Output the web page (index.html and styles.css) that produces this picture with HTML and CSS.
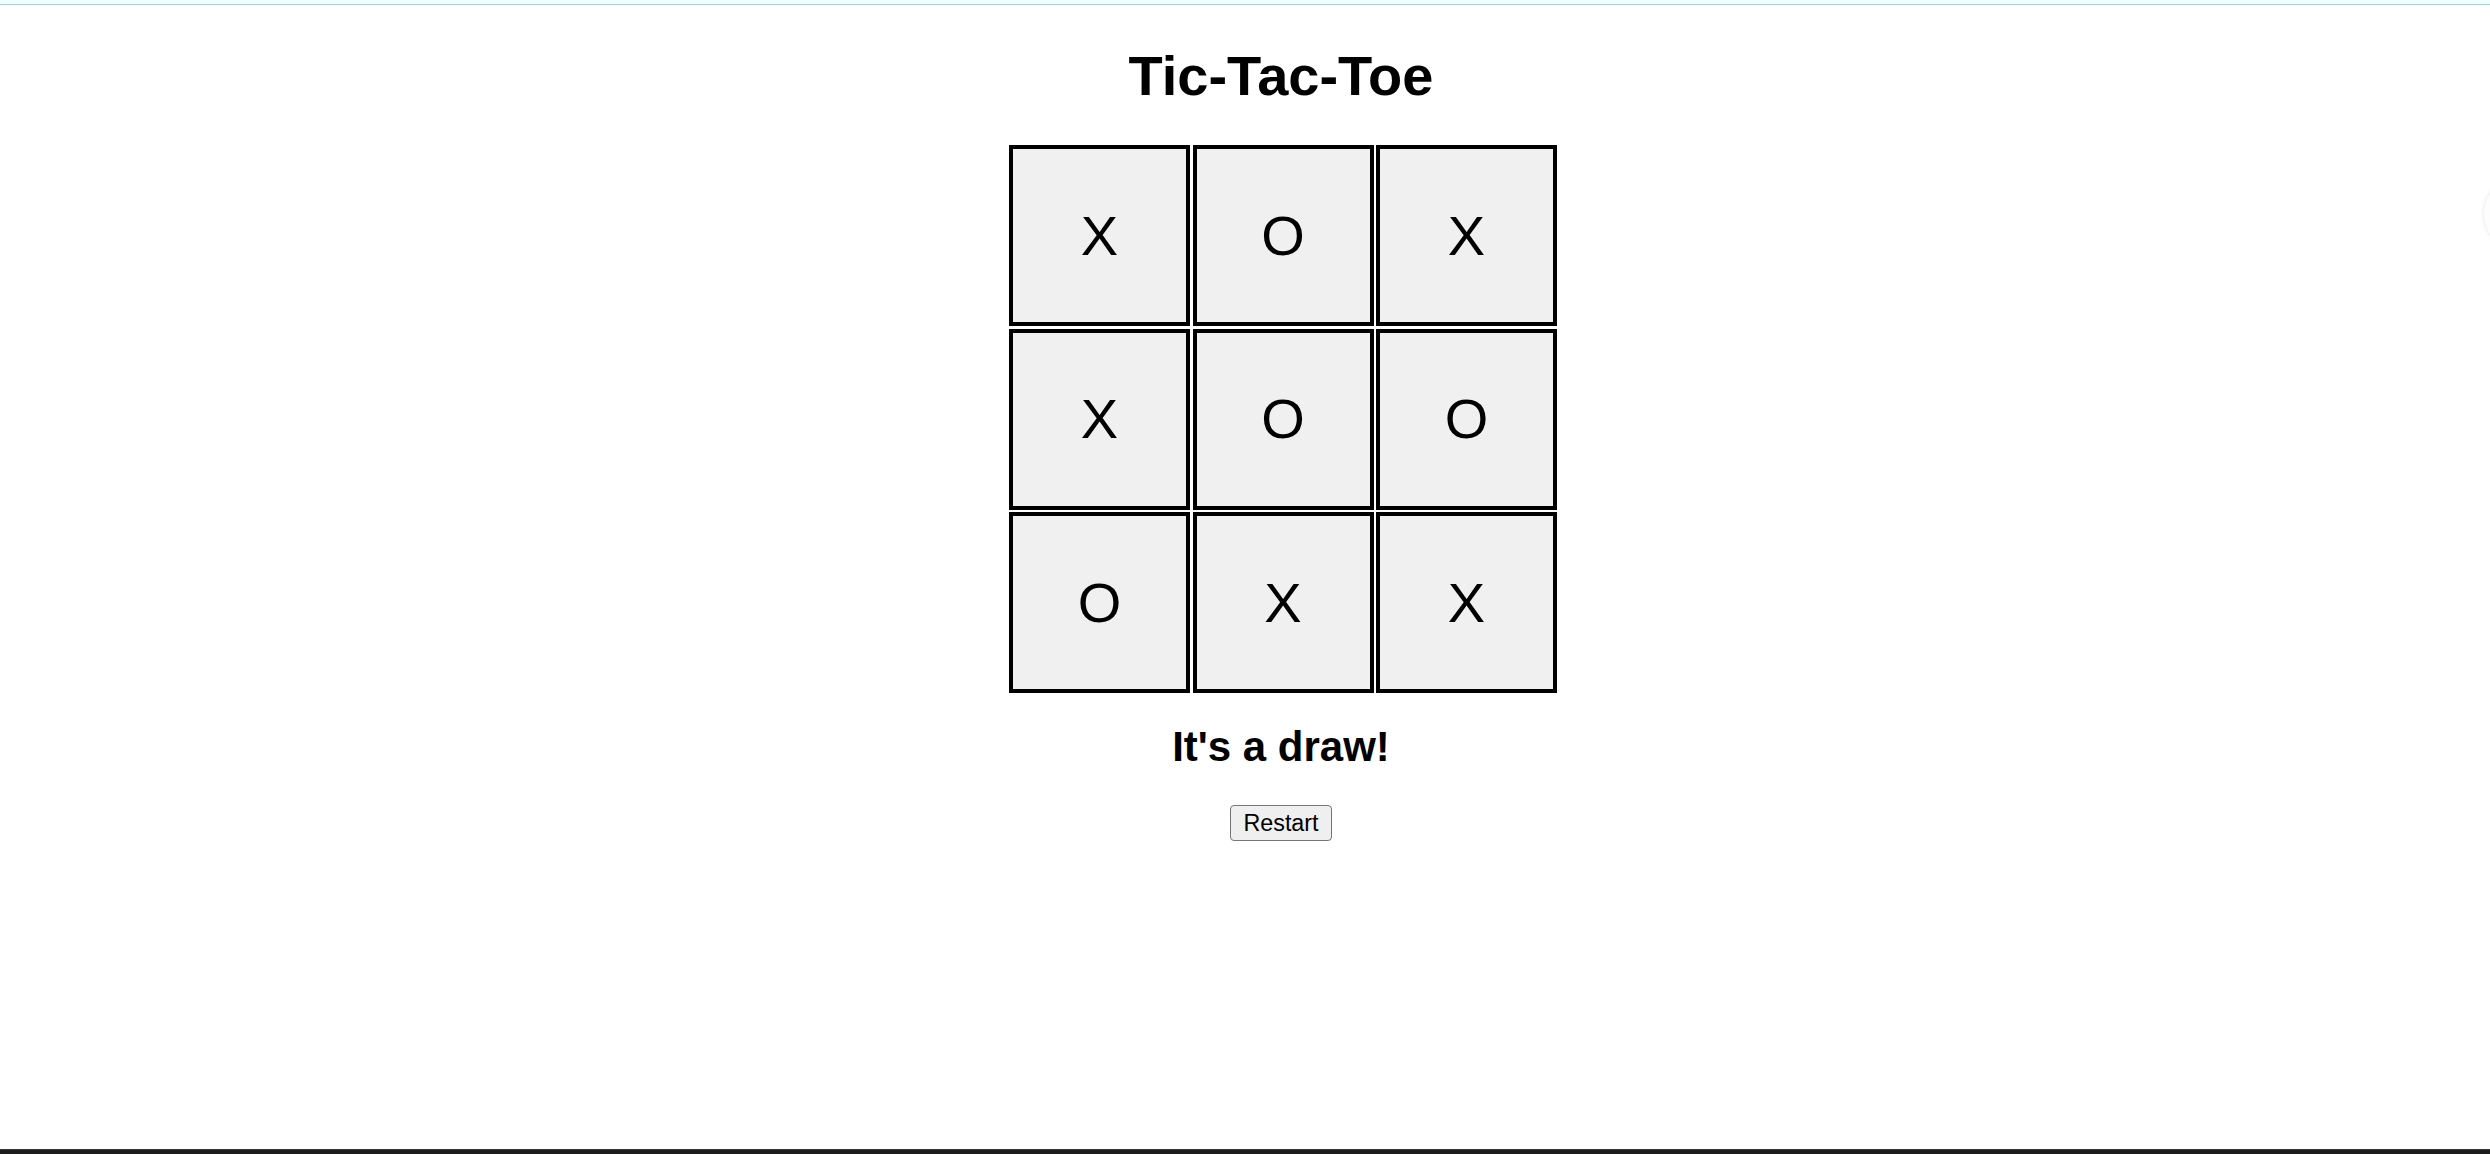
FILE: index.html
```html
<!DOCTYPE html>
<html lang="en">
<head>
<meta charset="utf-8">
<title>Tic-Tac-Toe</title>
<link rel="stylesheet" href="styles.css">
</head>
<body>
<div class="topbar"></div>
<main class="game">
  <h1 class="title">Tic-Tac-Toe</h1>
  <div class="board">
    <div class="cell">X</div>
    <div class="cell">O</div>
    <div class="cell">X</div>
    <div class="cell">X</div>
    <div class="cell">O</div>
    <div class="cell">O</div>
    <div class="cell">O</div>
    <div class="cell">X</div>
    <div class="cell">X</div>
  </div>
  <h2 class="status">It's a draw!</h2>
  <button class="restart" type="button">Restart</button>
</main>
<div class="edge-handle"></div>
<div class="bottombar"></div>
</body>
</html>
```

FILE: styles.css
```css
html, body {
  margin: 0;
  padding: 0;
  background: #ffffff;
  height: 100%;
}
body {
  font-family: "Liberation Sans", Arial, sans-serif;
  color: #000;
  position: relative;
  overflow: hidden;
  display: flex;
  flex-direction: column;
}
.topbar {
  height: 4px;
  background: #effefe;
  border-bottom: 1px solid #b2cccc;
  flex: none;
}
.game {
  flex: 1;
  display: flex;
  flex-direction: column;
  align-items: center;
  padding-left: 72px;
}
.title {
  margin: 39px 0 0 0;
  font-size: 56px;
  line-height: 64px;
  font-weight: bold;
}
.board {
  margin: 37px 0 0 4px;
  display: grid;
  grid-template-columns: repeat(3, 181px);
  grid-template-rows: repeat(3, 181px);
  gap: 2.5px;
}
.cell {
  box-sizing: border-box;
  border: 4px solid #000;
  background: #f0f0f0;
  display: flex;
  align-items: center;
  justify-content: center;
  font-size: 56px;
  line-height: 1;
}
.status {
  margin: 30px 0 0 0;
  font-size: 42px;
  line-height: 48px;
  font-weight: bold;
}
.restart {
  margin-top: 34px;
  box-sizing: border-box;
  width: 102px;
  height: 36px;
  padding: 0;
  font-family: "Liberation Sans", Arial, sans-serif;
  font-size: 23.3px;
  color: #000;
  background: #efefef;
  border: 1.5px solid #767676;
  border-radius: 4px;
}
.edge-handle {
  position: absolute;
  right: -22px;
  top: 190px;
  width: 28px;
  height: 48px;
  border-radius: 50%;
  background: #fdfdfd;
  box-shadow: 0 0 4px rgba(0, 0, 0, 0.12);
}
.bottombar {
  flex: none;
  height: 4px;
  background: #1c1c1c;
  border-top: 1px solid #3a3a3a;
}
```
